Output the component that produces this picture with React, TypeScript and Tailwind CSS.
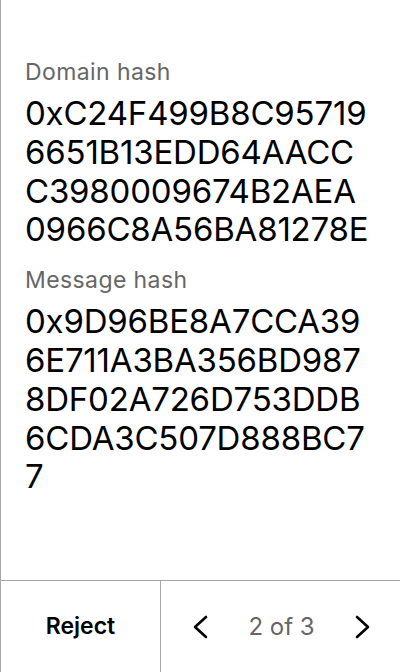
// hashes as they wrap on this screen
const DOMAIN_HASH = ["0xC24F499B8C95719", "6651B13EDD64AACC", "C3980009674B2AEA", "0966C8A56BA81278E"];
const MESSAGE_HASH = ["0x9D96BE8A7CCA39", "6E711A3BA356BD987", "8DF02A726D753DDB", "6CDA3C507D888BC7", "7"];

function HashField({ label, lines }: { label: string; lines: string[] }) {
    return (
        <div className="flex flex-col">
            <div className="text-[23px] leading-[30px] tracking-[0.4px] text-[#666666]">{label}</div>
            <div className="mt-[7px] text-[33px] leading-[38.8px] tracking-[-0.2px] text-black">
                {lines.map((line) => (
                    <div key={line}>{line}</div>
                ))}
            </div>
        </div>
    );
}

function Chevron({ dir }: { dir: "left" | "right" }) {
    return (
        <svg width="16" height="24" viewBox="0 0 16 24" fill="none" stroke="black" strokeWidth="2.6" strokeLinecap="round" strokeLinejoin="round">
            {dir === "left" ? <polyline points="14,2 3,12 14,22" /> : <polyline points="2,2 13,12 2,22" />}
        </svg>
    );
}

export default function App() {
    return (
        <div
            className="w-[400px] h-[672px] flex flex-col bg-white border-l border-[#a8a8a8]"
            style={{ fontFamily: "Inter, 'Liberation Sans', sans-serif" }}
        >
            <div className="flex-1 flex flex-col gap-[16px] pl-[24px] pr-[20px] pt-[57px]">
                <HashField label="Domain hash" lines={DOMAIN_HASH} />
                <HashField label="Message hash" lines={MESSAGE_HASH} />
            </div>

            <div className="h-[92px] flex border-t border-[#a8a8a8]">
                <button className="w-[159px] flex items-center justify-center text-[23px] font-semibold text-black">
                    Reject
                </button>
                <div className="flex-1 flex items-center justify-between border-l border-[#a8a8a8] pl-[31px] pr-[29px]">
                    <Chevron dir="left" />
                    <span className="text-[24px] text-[#666666]">2 of 3</span>
                    <Chevron dir="right" />
                </div>
            </div>
        </div>
    );
}
